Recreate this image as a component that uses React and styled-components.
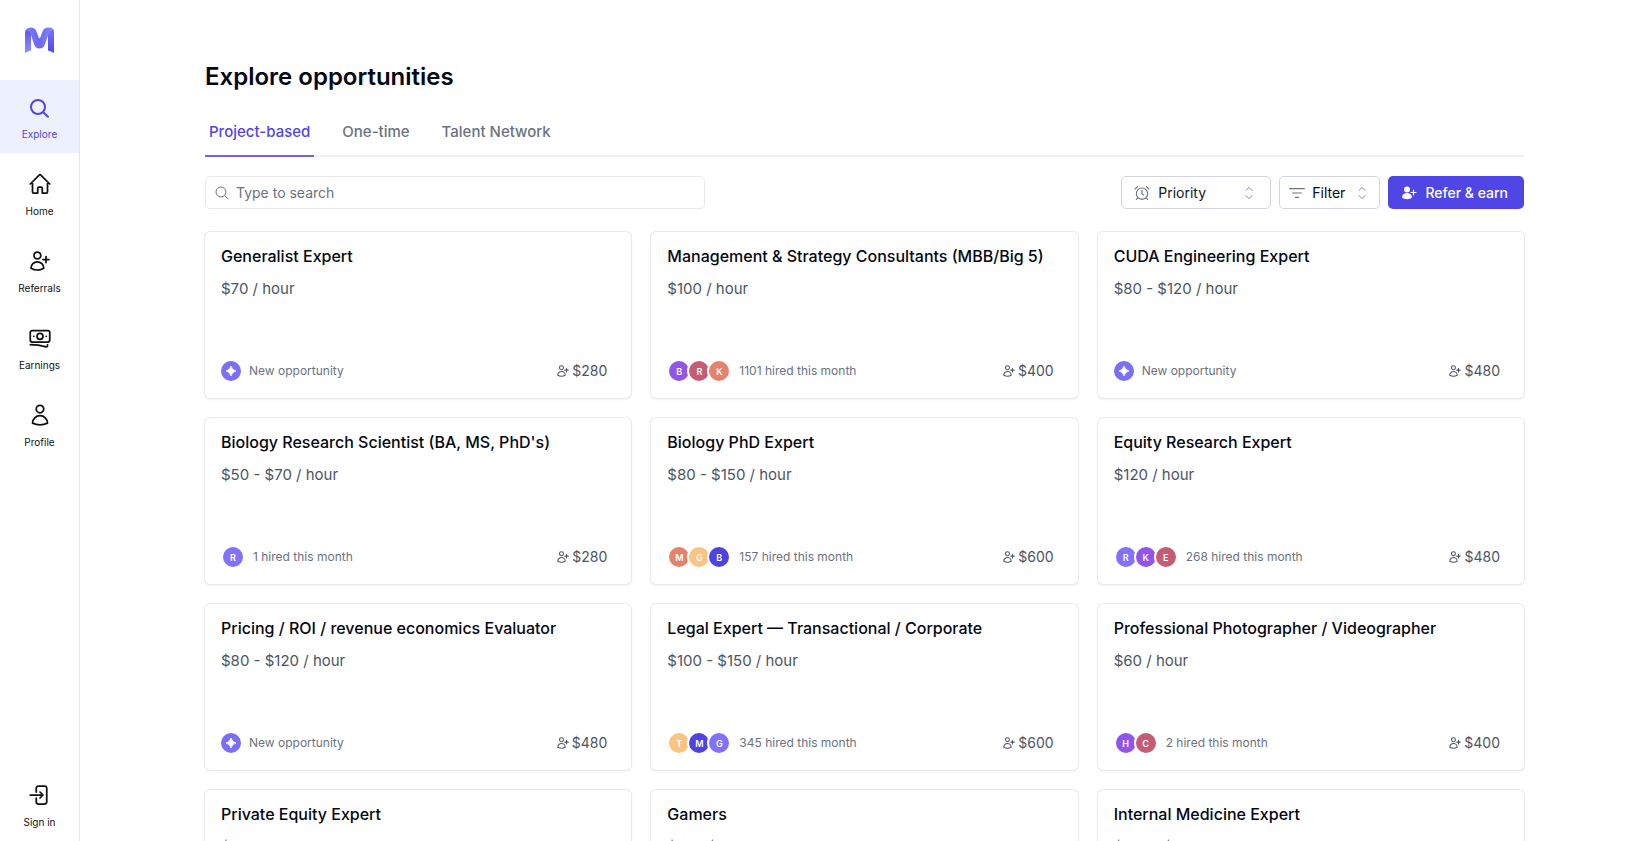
import React, {useState} from "react";
import styled, {createGlobalStyle, css} from "styled-components";

const opportunities = [
    {title: "Generalist Expert", pay: "$70 / hour", bonus: "$280", hired: 0, people: ""},
    {title: "Management & Strategy Consultants (MBB/Big 5)", pay: "$100 / hour", bonus: "$400", hired: 1101, people: "BRK", colors: ["violet", "rose", "coral"]},
    {title: "CUDA Engineering Expert", pay: "$80 - $120 / hour", bonus: "$480", hired: 0, people: ""},
    {title: "Biology Research Scientist (BA, MS, PhD's)", pay: "$50 - $70 / hour", bonus: "$280", hired: 1, people: "R", colors: ["lilac"]},
    {title: "Biology PhD Expert", pay: "$80 - $150 / hour", bonus: "$600", hired: 157, people: "MGB", colors: ["coral", "sand", "indigo"]},
    {title: "Equity Research Expert", pay: "$120 / hour", bonus: "$480", hired: 268, people: "RKE", colors: ["lilac", "violet", "rose"]},
    {title: "Pricing / ROI / revenue economics Evaluator", pay: "$80 - $120 / hour", bonus: "$480", hired: 0, people: ""},
    {title: "Legal Expert — Transactional / Corporate", pay: "$100 - $150 / hour", bonus: "$600", hired: 345, people: "TMG", colors: ["sand", "indigo", "lilac"]},
    {title: "Professional Photographer / Videographer", pay: "$60 / hour", bonus: "$400", hired: 2, people: "HC", colors: ["violet", "rose"]},
    {title: "Private Equity Expert", pay: "$90 / hour", bonus: "$480", hired: 0, people: ""},
    {title: "Gamers", pay: "$15 - $21 / hour", bonus: "$280", hired: 0, people: ""},
    {title: "Internal Medicine Expert", pay: "$130 - $180 / hour", bonus: "$600", hired: 0, people: ""},
];

const avatarColors = {
    violet: "#9155e8",
    rose: "#c65b74",
    coral: "#e5826c",
    sand: "#f9c580",
    indigo: "#4f43e0",
    lilac: "#8272fb",
};

const icons = {
    explore: "M17 12a7 7 0 1 1-14 0 7 7 0 0 1 14 0ZM15.200 17.200 20 21.800",
    search: "m21 21-5.197-5.197m0 0A7.5 7.5 0 1 0 5.196 5.196a7.5 7.5 0 0 0 10.607 10.607Z",
    home: "m2.25 12 8.954-8.955a1.126 1.126 0 0 1 1.591 0L21.75 12M4.5 9.75v10.125c0 .621.504 1.125 1.125 1.125H9.75v-4.875c0-.621.504-1.125 1.125-1.125h2.25c.621 0 1.125.504 1.125 1.125V21h4.125c.621 0 1.125-.504 1.125-1.125V9.75",
    userPlus: "M18 7.5v3m0 0v3m0-3h3m-3 0h-3m-2.25-4.125a3.375 3.375 0 1 1-6.75 0 3.375 3.375 0 0 1 6.75 0ZM3 19.235v-.11a6.375 6.375 0 0 1 12.75 0v.109A12.318 12.318 0 0 1 9.374 21c-2.331 0-4.512-.645-6.374-1.766Z",
    cash: "M2.25 18.75a60.07 60.07 0 0 1 15.797 2.101c.727.198 1.453-.342 1.453-1.096V18.75M4.2 4.5h15.6a1.95 1.95 0 0 1 1.95 1.95v7.6a1.95 1.95 0 0 1-1.95 1.95H4.2a1.95 1.95 0 0 1-1.95-1.95v-7.6A1.95 1.95 0 0 1 4.2 4.5ZM15 10.3a3 3 0 1 1-6 0 3 3 0 0 1 6 0ZM18.2 10.3h.01M5.8 10.3h.01",
    user: "M15.75 6a3.75 3.75 0 1 1-7.5 0 3.75 3.75 0 0 1 7.5 0ZM4.5 20.118a7.5 7.5 0 0 1 15 0A17.933 17.933 0 0 1 12 21.75c-2.676 0-5.216-.584-7.5-1.632Z",
    signIn: "M8.25 9V5.25A2.25 2.25 0 0 1 10.5 3h6a2.25 2.25 0 0 1 2.25 2.25v13.5A2.25 2.25 0 0 1 16.5 21h-6a2.25 2.25 0 0 1-2.25-2.25V15M12 9l3 3m0 0-3 3m3-3H2.25",
    alarm: "M12 8v5l2.5 2M20.5 13a8.5 8.500 0 1 1-17 0 8.500 8.500 0 0 1 17 0ZM6 19l-2.500 2.500M18 19l2.500 2.500M1.500 6 5.500 2.500M22.500 6 18.500 2.500",
    lines: "M1 5.500h22M5.500 12h13M9.500 18.500h5",
    sort: "M8.25 15 12 18.75 15.75 15m-7.5-6L12 5.25 15.75 9",
};

const Icon = ({name, size = 24, weight = 1.5}) => (
    <svg width={size} height={size} viewBox="0 0 24 24" fill="none" stroke="currentColor"
         strokeWidth={weight} strokeLinecap="round" strokeLinejoin="round" aria-hidden="true">
        <path d={icons[name]}/>
    </svg>
);

const Logo = () => (
    <svg width="30" height="26" viewBox="0 0 30 26" aria-hidden="true">
        <defs>
            <linearGradient id="legLeft" x1="0" y1="0" x2="0" y2="1">
                <stop offset="0" stopColor="#5a50e6"/>
                <stop offset="1" stopColor="#8e93fd"/>
            </linearGradient>
            <linearGradient id="legRight" x1="0" y1="0" x2="0" y2="1">
                <stop offset="0" stopColor="#7b75f7"/>
                <stop offset="1" stopColor="#5146ee"/>
            </linearGradient>
            <linearGradient id="fold" x1="0" y1="0" x2="1" y2="0">
                <stop offset="0" stopColor="#7d7cf6"/>
                <stop offset="0.5" stopColor="#6c68ef"/>
                <stop offset="1" stopColor="#8d8bff"/>
            </linearGradient>
        </defs>
        <path d="M0 26V6C0 3 2 1 5 1l1 4v18.500Q3 24 0 26Z" fill="url(#legLeft)"/>
        <path d="M29 26V5C29 2 27 .5 24.500 .5L23 4v19.500Q26 24 29 26Z" fill="url(#legRight)"/>
        <path d="M1 4C2 1.500 4 .5 6 .5c2.500 0 4.500 1.500 5.500 4l2 5.500q1 2.500 2 0l2-5.500C18.500 2 20.500 .5 23 .5c2.500 0 4.500 1 5.500 2.500-2-.5-3.500.5-4.500 3l-4 11c-1 3-2.500 4.500-5.500 4.500s-4.500-1.500-5.500-4.500L6 8C5 5 3.500 3.500 1 4Z" fill="url(#fold)"/>
    </svg>
);

const Avatars = ({people, colors}) => (
    <AvatarStack>
        {people.split("").map((letter, i) => (
            <Avatar key={letter} $color={avatarColors[colors[i]]}>{letter}</Avatar>
        ))}
    </AvatarStack>
);

const Opportunity = ({title, pay, bonus, hired, people, colors}) => (
    <Card href="#">
        <CardTitle>{title}</CardTitle>
        <Pay>{pay}</Pay>
        <CardFooter>
            {hired ? (
                <Avatars people={people} colors={colors}/>
            ) : (
                <NewBadge>
                    <svg width="10" height="10" viewBox="0 0 12 12" aria-hidden="true">
                        <path d="M6 0Q7 5 12 6 7 7 6 12 5 7 0 6 5 5 6 0Z" fill="#fff" stroke="#fff" strokeLinejoin="round"/>
                    </svg>
                </NewBadge>
            )}
            <Status>{hired ? `${hired} hired this month` : "New opportunity"}</Status>
            <Bonus>
                <Icon name="userPlus" size={14} weight={1.8}/>
                {bonus}
            </Bonus>
        </CardFooter>
    </Card>
);

export default function App() {
    const [tab, setTab] = useState("Project-based");
    const [search, setSearch] = useState("");

    const shown = opportunities.filter(item => item.title.toLowerCase().includes(search.toLowerCase()));

    return (
        <>
            <GlobalStyle/>
            <Page>
                <Sidebar>
                    <LogoLink href="#" aria-label="Dashboard"><Logo/></LogoLink>
                    <NavItem href="#" $active><Icon name="explore" weight={2}/>Explore</NavItem>
                    <NavItem href="#"><Icon name="home" weight={1.75}/>Home</NavItem>
                    <NavItem href="#"><Icon name="userPlus" weight={1.75}/>Referrals</NavItem>
                    <NavItem href="#"><Icon name="cash" weight={1.75}/>Earnings</NavItem>
                    <NavItem href="#"><Icon name="user" weight={1.75}/>Profile</NavItem>
                    <Spacer/>
                    <NavItem href="#"><Icon name="signIn" weight={1.75}/>Sign in</NavItem>
                </Sidebar>

                <Main>
                    <Title>Explore opportunities</Title>

                    <Tabs role="tablist">
                        {["Project-based", "One-time", "Talent Network"].map(name => (
                            <Tab key={name} role="tab" aria-selected={tab === name} $active={tab === name}
                                 onClick={() => setTab(name)}>{name}</Tab>
                        ))}
                    </Tabs>

                    <Toolbar>
                        <SearchBox>
                            <Icon name="search" size={16} weight={1.5}/>
                            <SearchInput type="text" placeholder="Type to search" aria-label="Search"
                                         value={search} onChange={event => setSearch(event.target.value)}/>
                        </SearchBox>
                        <Spacer/>
                        <SortBox>
                            <Icon name="alarm" size={16} weight={1.75}/>
                            <SortSelect aria-label="Sort by">
                                <option>Priority</option>
                                <option>Newest</option>
                            </SortSelect>
                            <Icon name="sort" size={20} weight={1}/>
                        </SortBox>
                        <FilterButton>
                            <Icon name="lines" size={16} weight={1.75}/>
                            <span>Filter</span>
                            <Icon name="sort" size={20} weight={1}/>
                        </FilterButton>
                        <ReferButton>
                            <svg width="16" height="16" viewBox="0 0 16 16" fill="currentColor" aria-hidden="true">
                                <circle cx="6" cy="4.500" r="3"/>
                                <path d="M1 12.500C1 9.500 3.200 8 6 8s5 1.500 5 4.500C9.800 13.600 8 14.200 6 14.200S2.200 13.600 1 12.500Z"/>
                                <path d="M12.500 5v5M10 7.500h5" stroke="currentColor" strokeWidth="1.200" strokeLinecap="round"/>
                            </svg>
                            Refer &amp; earn
                        </ReferButton>
                    </Toolbar>

                    <Grid>
                        {shown.map(item => <Opportunity key={item.title} {...item}/>)}
                    </Grid>
                </Main>
            </Page>
        </>
    );
}


const GlobalStyle = createGlobalStyle`
  * {
    box-sizing: border-box;
  }

  body {
    margin: 0;
    background: #fff;
    color: #030712;
    font-family: Inter, "Liberation Sans", sans-serif;
  }

  button, input, select {
    font-family: inherit;
  }

  svg {
    flex-shrink: 0;
  }
`

const Page = styled.div`
  display: flex;
  height: 100vh;
`

const Sidebar = styled.nav`
  display: flex;
  flex-direction: column;
  gap: 4px;
  flex: 0 0 80px;
  border-right: 1px solid #e5e7eb;
`

const LogoLink = styled.a`
  display: flex;
  align-items: center;
  justify-content: center;
  height: 80px;
  margin-bottom: -4px;
`

const NavItem = styled.a`
  display: flex;
  flex-direction: column;
  align-items: center;
  gap: 7px;
  padding: 15px 0 11px;
  font-size: 10px;
  line-height: 16px;
  text-decoration: none;
  color: #111;

  ${props => props.$active && css`
    color: #4f46e5;
    background-color: #edf1fe;
  `}
`

const Spacer = styled.div`
  flex: 1;
`

const Main = styled.main`
  flex: 1;
  min-width: 0;
  overflow-y: auto;
  scrollbar-width: none;
  padding: 61px 125px;
`

const Title = styled.h1`
  margin: 0 0 23px;
  font-size: 24px;
  font-weight: 600;
  line-height: 32px;
`

const Tabs = styled.div`
  display: flex;
  gap: 24px;
  box-shadow: inset 0 -2px #f0f1f3;
`

const Tab = styled.button`
  padding: 4px 4px 12px;
  border: none;
  border-bottom: 2px solid ${props => props.$active ? "#6c64e6" : "transparent"};
  background: none;
  color: ${props => props.$active ? "#4f46e5" : "#6b7280"};
  font-size: 15px;
  font-weight: 500;
  line-height: 23px;
  cursor: pointer;
`

const Toolbar = styled.div`
  display: flex;
  align-items: center;
  gap: 8px;
  margin: 19px 0 23px;
`

const controlBox = css`
  display: flex;
  align-items: center;
  height: 33px;
  border-radius: 5px;
`

const SearchBox = styled.label`
  ${controlBox}
  flex: 0 1 500px;
  gap: 6px;
  padding: 0 8px;
  border: 1px solid #e8eaed;
  color: #6b7280;
`

const SearchInput = styled.input`
  flex: 1;
  min-width: 0;
  padding: 0;
  border: none;
  outline: none;
  font-size: 14px;
  line-height: 20px;
  color: #030712;

  &::placeholder {
    color: #6b7280;
  }
`

const SortBox = styled.label`
  ${controlBox}
  width: 150px;
  gap: 8px;
  padding: 0 11px 0 12px;
  border: 1px solid #d1d5db;
  color: #6b7280;
`

const SortSelect = styled.select`
  flex: 1;
  min-width: 0;
  padding: 0;
  appearance: none;
  border: none;
  outline: none;
  background: none;
  font-size: 14px;
  color: #111827;
`

const FilterButton = styled.button`
  ${controlBox}
  gap: 7px;
  padding: 0 7px 0 9px;
  border: 1px solid #d1d5db;
  background: #fff;
  color: #6b7280;
  font-size: 14px;
  cursor: pointer;

  span {
    color: #030712;
  }
`

const ReferButton = styled.button`
  ${controlBox}
  gap: 8px;
  padding: 0 16px 0 13px;
  border: none;
  background: #4f46e5;
  color: #fff;
  font-size: 14px;
  font-weight: 500;
  cursor: pointer;
`

const Grid = styled.div`
  display: grid;
  grid-template-columns: repeat(3, minmax(0, 1fr));
  gap: 20px;
`

const Card = styled.a`
  display: flex;
  flex-direction: column;
  min-height: 166px;
  padding: 12px 16px 15px;
  border-radius: 5px;
  box-shadow: 0 0 0 1px #e9eaec, 0 1px 2px 1px #f4f4f5;
  color: inherit;
  text-decoration: none;
`

const CardTitle = styled.h2`
  margin: 0;
  font-size: 16px;
  font-weight: 500;
  line-height: 24px;
`

const Pay = styled.div`
  margin-top: 9px;
  font-size: 15px;
  line-height: 24px;
  color: #4b5563;
`

const CardFooter = styled.div`
  display: flex;
  align-items: center;
  gap: 8px;
  height: 24px;
  margin-top: auto;
  padding-right: 8px;
`

const AvatarStack = styled.div`
  display: flex;
`

const Avatar = styled.div`
  display: flex;
  align-items: center;
  justify-content: center;
  width: 24px;
  height: 24px;
  border: 2px solid #fff;
  border-radius: 50%;
  background: ${props => props.$color};
  color: #fff;
  font-size: 9px;
  font-weight: 600;

  & + & {
    margin-left: -4px;
  }
`

const NewBadge = styled.div`
  display: flex;
  align-items: center;
  justify-content: center;
  width: 20px;
  height: 20px;
  border-radius: 50%;
  background: #7b6ff6;
`

const Status = styled.div`
  flex: 1;
  font-size: 12px;
  line-height: 16px;
  color: #6b7280;
`

const Bonus = styled.div`
  display: flex;
  align-items: center;
  gap: 2px;
  font-size: 14px;
  line-height: 20px;
  color: #4b5563;
`
